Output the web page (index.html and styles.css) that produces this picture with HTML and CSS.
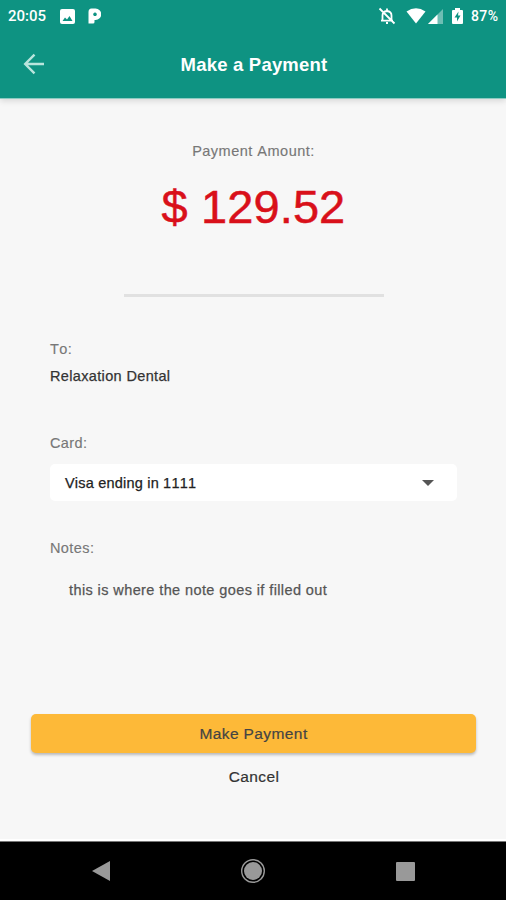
FILE: index.html
```html
<!DOCTYPE html>
<html lang="en">
<head>
<meta charset="utf-8">
<title>Make a Payment</title>
<link rel="stylesheet" href="styles.css">
</head>
<body>
<div class="screen">
  <header class="top">
    <div class="status">
      <span class="time">20:05</span>
      <svg class="photo" width="15" height="15" viewBox="0 0 15 15"><rect width="15" height="15" rx="2" fill="#fff"/><path d="M2.500 12 5 8.500l2 2 2.500-3.500 3 5z" fill="#0e9382"/></svg>
      <svg class="pandora" width="13" height="16" viewBox="0 0 13 16"><path fill-rule="evenodd" d="M3.500.5H7.500a5.300 5.300 0 0 1 0 11.500H6.500V14q0 1.500-1.500 1.500H.5V4q0-3.500 3-3.500zM7 4.500a1.800 1.800 0 1 0 .01 0z" fill="#fff"/></svg>
      <svg class="bell" width="18" height="18" viewBox="0 0 18 18" fill="none" stroke="#fff" stroke-width="1.800"><path d="M4.500 13.500V8.500Q4.500 4.500 9 4q4.500.5 4.500 4.500v5M3 13.700h12M9 4V1.500M1.500 1.500l15 15M8 16h2"/></svg>
      <svg class="wifi" width="20" height="16" viewBox="0 0 20 16"><path d="M.5 3.500Q10-3 19.500 3.500L10 15.500z" fill="#fff"/></svg>
      <svg class="signal" width="15" height="15" viewBox="0 0 15 15"><path d="M15 0v15H0z" fill="#fff" opacity=".4"/><path d="M9.500 5.500V15H0z" fill="#fff"/></svg>
      <svg class="battery" width="11" height="16" viewBox="0 0 11 16"><path d="M3 0h5v2h2q1 0 1 1v12q0 1-1 1H1q-1 0-1-1V3q0-1 1-1h2z" fill="#fff"/><path d="M6.500 3.500 2.500 9.500H5v4l3.500-6H6z" fill="#0e9382"/></svg>
      <span class="percent">87%</span>
    </div>
    <div class="bar">
      <svg class="back" width="22" height="22" viewBox="0 0 22 22" fill="none" stroke="#b9e5dd" stroke-width="2.400"><path d="M21 11H2.500M11.500 1.700 2.200 11l9.300 9.300"/></svg>
      <h1>Make a Payment</h1>
    </div>
  </header>
  <main>
    <div class="label amount-label">Payment Amount:</div>
    <div class="amount">$ 129.52</div>
    <hr>
    <section class="to"><div class="label">To:</div><div class="payee">Relaxation Dental</div></section>
    <section class="card"><div class="label">Card:</div>
      <div class="select"><span>Visa ending in 1111</span><svg width="12" height="6" viewBox="0 0 12 6"><path d="M0 0h12L6 6z" fill="#555"/></svg></div>
    </section>
    <section class="notes"><div class="label">Notes:</div><div class="note">this is where the note goes if filled out</div></section>
    <button class="pay">Make Payment</button>
    <button class="cancel">Cancel</button>
  </main>
  <nav>
    <svg width="18" height="20" viewBox="0 0 18 20"><path d="M18 0v20L0 10z" fill="#999"/></svg>
    <svg width="24" height="24" viewBox="0 0 24 24"><circle cx="12" cy="12" r="11.300" fill="none" stroke="#999" stroke-width="1.400"/><circle cx="12" cy="12" r="9" fill="#999"/></svg>
    <svg width="19" height="19" viewBox="0 0 19 19"><rect width="19" height="19" rx="1" fill="#999"/></svg>
  </nav>
</div>
</body>
</html>
```
FILE: styles.css
```css
* { box-sizing: border-box; }
body { margin: 0; font-family: "Liberation Sans", Arial, sans-serif; font-kerning: none; }
.screen { width: 506px; height: 900px; display: flex; flex-direction: column; background: #f7f7f7; overflow: hidden; }
.top { height: 99px; flex: none; background: #0e9382; color: #fff; border-bottom: 1px solid #8ccbc2; box-shadow: 0 2px 6px rgba(0,0,0,.13); }
.status { height: 32px; display: flex; align-items: center; padding: 0 7px 0 8px; font: 500 15px/32px Roboto, sans-serif; }
.time { width: 37px; }
.photo { margin-left: 15px; }
.pandora { margin-left: 13px; }
.bell { margin-left: auto; }
.wifi { margin-left: 10px; }
.signal { margin-left: 2px; }
.battery { margin-left: 9px; }
.percent { margin-left: 8px; width: 28px; font-size: 14px; letter-spacing: .4px; }
.bar { height: 66px; display: grid; grid-template-columns: 58px 1fr 56px; align-items: center; }
.back { margin: -3px 0 0 23px; }
h1 { margin: 0; text-align: center; font-size: 18.5px; letter-spacing: .2px; }
main { flex: 1; padding: 42px 30px 0 31px; display: flex; flex-direction: column; }
.label { font-size: 14.5px; line-height: 20px; letter-spacing: .4px; color: #777; -webkit-text-stroke: .15px; }
.amount-label { text-align: center; letter-spacing: .5px; }
.amount { margin-top: 18px; text-align: center; font-size: 47px; line-height: 56px; letter-spacing: .1px; color: #d9101a; -webkit-text-stroke: .5px #d9101a; }
hr { width: 260px; height: 3px; margin: 59px auto 0; border: 0; background: #e1e1e1; }
section { margin: 0 19px; }
.to { margin-top: 42px; }
.payee { margin-top: 7px; font-size: 14.5px; line-height: 20px; letter-spacing: .35px; color: #333; -webkit-text-stroke: .25px; }
.card { margin-top: 47px; }
.select { height: 37px; margin-top: 11px; padding: 0 23px 0 15px; display: flex; align-items: center; justify-content: space-between; background: #fff; border-radius: 5px; font-size: 14.5px; letter-spacing: .2px; color: #222; -webkit-text-stroke: .25px; }
.notes { margin-top: 37px; }
.note { margin: 22px 0 0 19px; font-size: 14.5px; line-height: 20px; letter-spacing: .4px; color: #555; -webkit-text-stroke: .25px; }
button { font-family: inherit; font-kerning: none; border: 0; padding: 0; text-align: center; }
.pay { height: 39px; margin-top: 114px; background: #fdb938; border-radius: 5px; box-shadow: 0 2px 3px rgba(0,0,0,.25); font-size: 15.5px; letter-spacing: .4px; color: #444; -webkit-text-stroke: .2px; }
.cancel { margin-top: 14px; padding-left: 1px; background: none; font-size: 15.5px; line-height: 20px; letter-spacing: .4px; color: #333; -webkit-text-stroke: .2px; }
nav { height: 59px; flex: none; border-top: 1px solid #777; background: #000; box-shadow: 0 -2px #fff; display: flex; align-items: center; justify-content: space-between; padding: 0 91px 0 92px; }
```
